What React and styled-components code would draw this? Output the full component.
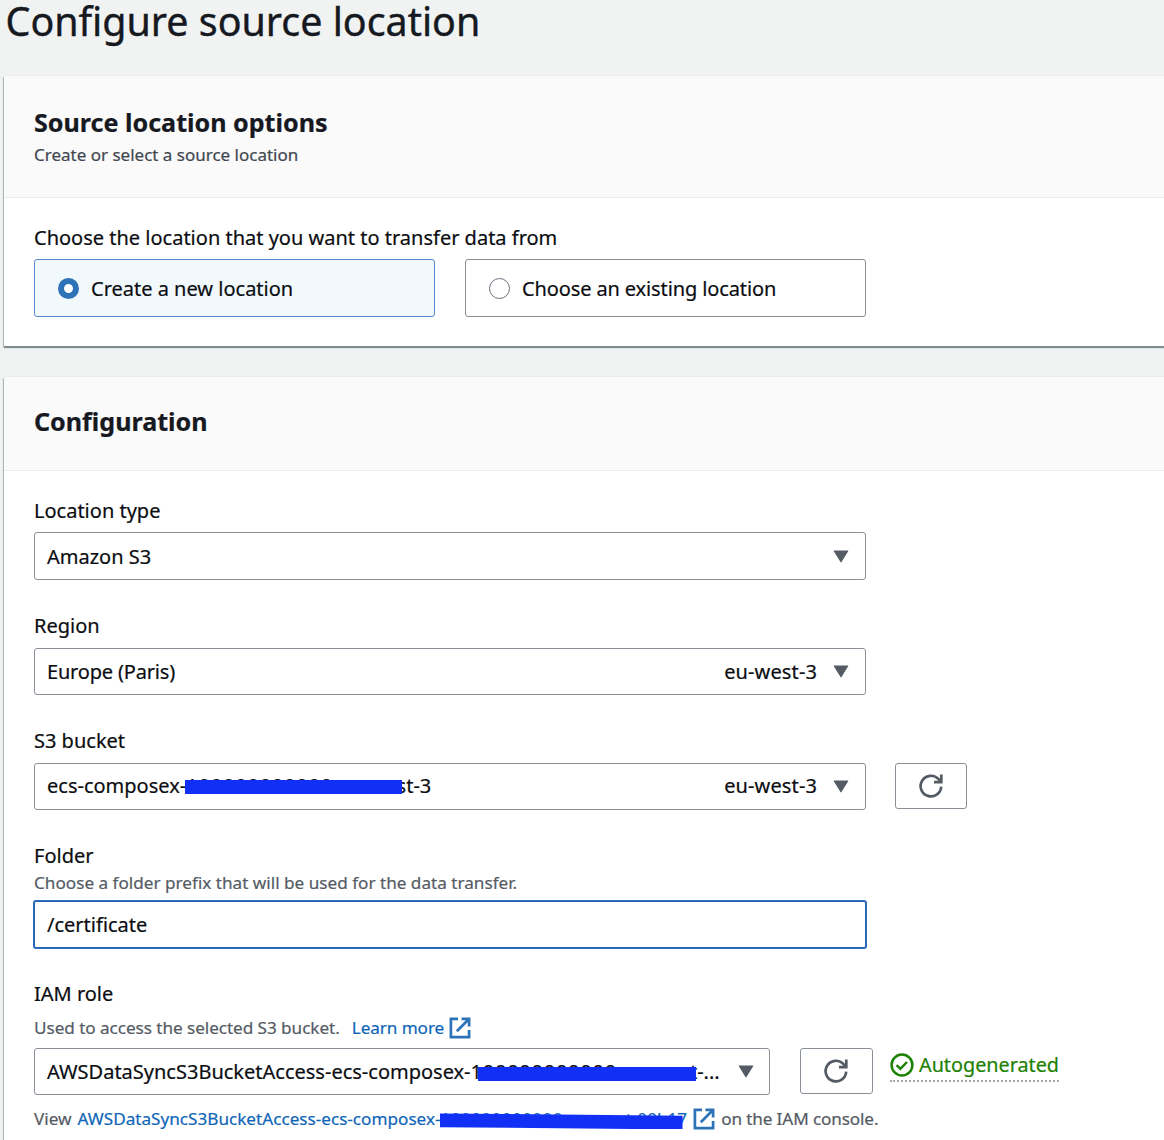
import React from "react";
import styled, { createGlobalStyle } from "styled-components";

const color = {
  page: "#f1f3f3",
  header: "#fafafa",
  ink: "#16191f",
  text: "#0b0d11",
  muted: "#545b64",
  line: "#eaeded",
  control: "#8a9097",
  link: "#0f66b8",
  accent: "#2e73b8",
  green: "#1d8102",
  marker: "#1230f5",
};

const GlobalStyle = createGlobalStyle`
  *, *::before, *::after { box-sizing: border-box; }
  html { overflow: hidden; height: 1140px; }
  body {
    margin: 0;
    height: 1140px;
    overflow: hidden;
    background: ${color.page};
    color: ${color.text};
    font-family: "Noto Sans", "Open Sans", sans-serif;
    font-size: 20px;
    line-height: 24px;
    -webkit-text-stroke: 0.2px currentColor;
  }
`;

const Page = styled.main`
  display: flex;
  flex-direction: column;
  padding-left: 4px;
  height: 1140px;
`;

const Title = styled.h1`
  margin: 0 0 34px 1.5px;
  flex: none;
  font-size: 39.4px;
  font-weight: 400;
  line-height: 42px;
  white-space: nowrap;
  color: ${color.ink};
  -webkit-text-stroke: 0.4px currentColor;
`;

const Panel = styled.section`
  flex: none;
  margin-bottom: 31px;
  background: #fff;
  box-shadow: 0 2px 1px rgba(110, 128, 130, 0.85), -1px 1px 1px rgba(0, 28, 36, 0.22), 0 -1px 0 #eaeded;
`;

const PanelHeader = styled.header`
  padding: ${(p) => p.$pad || "31px 30px 31px"};
  background: ${color.header};
  border-bottom: 1px solid ${color.line};
`;

const PanelTitle = styled.h2`
  margin: 0;
  font-size: 25.1px;
  font-weight: 700;
  line-height: 30px;
  color: ${color.ink};
`;

const PanelSubtitle = styled.p`
  margin: 7px 0 0;
  font-size: 17px;
  line-height: 22px;
  color: #414750;
`;

const PanelBody = styled.div`
  display: flex;
  flex-direction: column;
  gap: 34.8px;
  padding: 28px 30px 29px;
`;

const Field = styled.div`
  display: flex;
  flex-direction: column;
  margin-top: ${(p) => p.$shift || 0}px;
`;

const Label = styled.div`
  height: 24px;
  white-space: nowrap;
`;

const Hint = styled.div`
  display: flex;
  align-items: center;
  height: 22px;
  margin-top: ${(p) => p.$top || 0}px;
  font-size: 17.15px;
  line-height: 22px;
  white-space: pre;
  color: ${color.muted};
`;

const HintText = styled.span`
  letter-spacing: ${(p) => p.$spacing || "inherit"};
  margin: 0 ${(p) => p.$after || 0}px 0 ${(p) => p.$before || 0}px;
`;

const ControlRow = styled.div`
  display: flex;
  align-items: flex-start;
  gap: ${(p) => p.$gap || 30}px;
  margin-top: ${(p) => p.$top || 9.4}px;
`;

const Tile = styled.label`
  display: flex;
  align-items: center;
  gap: 12px;
  width: 401px;
  height: 58px;
  padding-left: 23px;
  border: 1px solid ${(p) => (p.$selected ? "#5488c7" : color.control)};
  border-radius: 3px;
  background: ${(p) => (p.$selected ? "#f1f9fd" : "#fff")};
`;

const TileText = styled.span`
  padding-top: 1px;
  letter-spacing: ${(p) => p.$spacing || "inherit"};
`;

const Radio = styled.span`
  width: 21px;
  height: 21px;
  border: ${(p) => (p.$selected ? `6.5px solid ${color.accent}` : "1.5px solid #6a717b")};
  border-radius: 50%;
  background: #fff;
`;

const Select = styled.div`
  display: flex;
  align-items: center;
  width: ${(p) => p.$width || 832}px;
  height: ${(p) => p.$height || 47}px;
  padding: 0 ${(p) => p.$end || 16}px 0 12px;
  border: 1px solid ${color.control};
  border-radius: 3px;
  background: #fff;
  white-space: nowrap;
`;

const Value = styled.span`
  flex: 1;
  padding-top: ${(p) => (p.$flush ? 0 : 1)}px;
  letter-spacing: ${(p) => p.$spacing || "inherit"};
`;

const Tag = styled.span`
  margin-right: 16px;
  padding-top: ${(p) => (p.$flush ? 0 : 1)}px;
  letter-spacing: 0.12px;
`;

const Input = styled.input`
  width: 832px;
  height: 47px;
  margin: 7px 0 0;
  padding: 1px 12px 0;
  border: 1px solid #2a62b4;
  border-radius: 2px;
  outline: none;
  box-shadow: 0 0 0 1px #2a6fc0;
  background: #fff;
  color: ${color.text};
  font: inherit;
`;

const IconButton = styled.button`
  display: flex;
  align-items: center;
  justify-content: center;
  width: ${(p) => p.$width || 72}px;
  height: 46px;
  padding: 0;
  border: 1px solid ${color.control};
  border-radius: 3px;
  background: #fff;
  color: ${color.muted};
`;

const Link = styled.a`
  display: inline-flex;
  align-items: center;
  gap: ${(p) => p.$gap || 5}px;
  color: ${color.link};
  text-decoration: none;
`;

const Redacted = styled.span`
  position: relative;
  display: inline-block;
`;

const Account = styled.span`
  letter-spacing: ${(p) => p.$spacing}px;
`;

const Marker = styled.span`
  position: absolute;
  left: ${(p) => p.$left}px;
  top: ${(p) => p.$top}px;
  width: ${(p) => p.$width}px;
  height: ${(p) => p.$height || 14}px;
  background: ${color.marker};
  clip-path: ${(p) => p.$clip || "none"};
`;

const Status = styled.span`
  display: flex;
  align-items: center;
  gap: 5px;
  height: 33px;
  margin: 1px 0 0 -12px;
  border-bottom: 2px dotted #a3a9ab;
  font-size: 19.8px;
  color: ${color.green};
`;

const Caret = () => (
  <svg width="16" height="13" viewBox="0 0 16 13" aria-hidden="true">
    <path d="M1.3 1h13.4L8 11.8Z" fill={color.muted} stroke={color.muted} strokeWidth="1.2" strokeLinejoin="round" />
  </svg>
);

const Refresh = () => (
  <svg width="26" height="26" viewBox="0 0 26 26" fill="none" stroke="currentColor" strokeWidth="2.7" aria-hidden="true">
    <path d="M23.2 13.6A10.3 10.3 0 1 1 20.6 6.2L23 8.6" />
    <path d="M23.3 1.4V9.1H16" />
  </svg>
);

const External = () => (
  <svg width="22" height="22" viewBox="0 0 22 22" fill="none" stroke={color.accent} strokeWidth="2.7" aria-hidden="true">
    <path d="M9 1.9H1.9V20.1H20.1V13" />
    <path d="M12.5 1.9H20.1V9.5M19.7 2.3L7.8 14.2" />
  </svg>
);

const Check = () => (
  <svg width="24" height="24" viewBox="0 0 24 24" fill="none" stroke="currentColor" strokeWidth="2.5" aria-hidden="true">
    <circle cx="12" cy="12" r="10.4" />
    <path d="M6.6 12.2L10.4 15.8L17 9" />
  </svg>
);

export default function App() {
  return (
    <Page>
      <GlobalStyle />
      <Title>Configure source location</Title>

      <Panel>
        <PanelHeader>
          <PanelTitle>Source location options</PanelTitle>
          <PanelSubtitle>Create or select a source location</PanelSubtitle>
        </PanelHeader>
        <PanelBody>
          <Field>
            <Label>Choose the location that you want to transfer data from</Label>
            <ControlRow $top={9}>
              <Tile $selected>
                <Radio $selected />
                <TileText>Create a new location</TileText>
              </Tile>
              <Tile>
                <Radio />
                <TileText $spacing="-0.12px">Choose an existing location</TileText>
              </Tile>
            </ControlRow>
          </Field>
        </PanelBody>
      </Panel>

      <Panel>
        <PanelHeader $pad="29px 30px 34px">
          <PanelTitle>Configuration</PanelTitle>
        </PanelHeader>
        <PanelBody>
          <Field>
            <Label>Location type</Label>
            <ControlRow>
              <Select $height={48}>
                <Value>Amazon S3</Value>
                <Caret />
              </Select>
            </ControlRow>
          </Field>

          <Field $shift={-1}>
            <Label>Region</Label>
            <ControlRow>
              <Select>
                <Value $spacing="-0.18px">Europe (Paris)</Value>
                <Tag>eu-west-3</Tag>
                <Caret />
              </Select>
            </ControlRow>
          </Field>

          <Field>
            <Label>S3 bucket</Label>
            <ControlRow $gap={29}>
              <Select>
                <Value $flush>
                  <Redacted>
                    ecs-composex-<Account $spacing={0.8}>100000000000</Account>-eu-west-3
                    <Marker $left={138} $top={6} $width={217} />
                  </Redacted>
                </Value>
                <Tag $flush>eu-west-3</Tag>
                <Caret />
              </Select>
              <IconButton aria-label="Refresh buckets">
                <Refresh />
              </IconButton>
            </ControlRow>
          </Field>

          <Field $shift={-0.6}>
            <Label>Folder</Label>
            <Hint $top={3.6}>Choose a folder prefix that will be used for the data transfer.</Hint>
            <Input defaultValue="/certificate" />
          </Field>

          <Field>
            <Label>IAM role</Label>
            <Hint $top={10.5}>
              <HintText $spacing="-0.05px" $after={12}>Used to access the selected S3 bucket.</HintText>
              <Link $gap={4.5}>
                <HintText $spacing="-0.08px">Learn more</HintText>
                <External />
              </Link>
            </Hint>
            <ControlRow $top={9.6} $gap={29.5}>
              <Select $width={736} $end={15}>
                <Value>
                  <Redacted>
                    AWSDataSyncS3BucketAccess-ecs-composex-<Account $spacing={0.75}>100000000000</Account>-eu-west-...
                    <Marker $left={431} $top={7} $width={218} />
                  </Redacted>
                </Value>
                <Caret />
              </Select>
              <IconButton $width={73} aria-label="Refresh roles">
                <Refresh />
              </IconButton>
              <Status>
                <Check />
                Autogenerated
              </Status>
            </ControlRow>
            <Hint $top={13}>
              <HintText $after={6}>View</HintText>
              <Link $gap={6}>
                <Redacted>
                  AWSDataSyncS3BucketAccess-ecs-composex-<Account $spacing={0.4}>100000000000</Account>-eu-west-00b17
                  <Marker
                    $left={362}
                    $top={5}
                    $width={243}
                    $height={16}
                    $clip="polygon(0 0, 100% 14%, 100% 100%, 0 86%)"
                  />
                </Redacted>
                <External />
              </Link>
              <HintText $spacing="-0.12px" $before={6}>on the IAM console.</HintText>
            </Hint>
          </Field>
        </PanelBody>
      </Panel>
    </Page>
  );
}
